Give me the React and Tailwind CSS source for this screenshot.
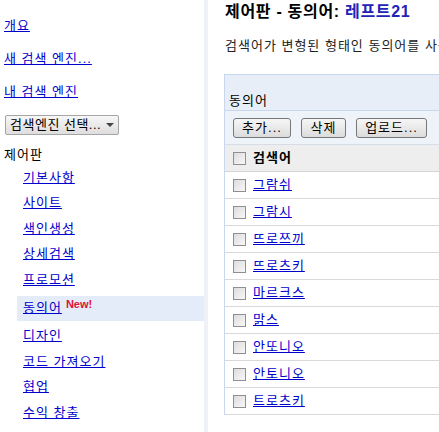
import React from "react";

const FONT = { fontFamily: '"Liberation Sans", "Noto Sans CJK KR", sans-serif' };

function Checkbox() {
  return (
    <span className="inline-block w-[13px] h-[13px] border border-[#8f8f8f] bg-gradient-to-br from-[#dcdcdc] to-[#f8f8f8] shrink-0" />
  );
}

function Btn({ children, w }) {
  return (
    <button
      className={`h-[20px] ${w} border border-[#777] rounded-[3px] bg-gradient-to-b from-[#f6f6f6] to-[#dcdcdc] text-[13px] leading-[18px] tracking-[1px] text-black flex items-center justify-center`}
      style={FONT}
    >
      {children}
    </button>
  );
}

const subItems1 = ["기본사항", "사이트", "색인생성", "상세검색", "프로모션"];
const subItems2 = ["디자인", "코드 가져오기", "협업", "수익 창출"];
const rows = ["그람쉬", "그람시", "뜨로쯔끼", "뜨로츠키", "마르크스", "맑스", "안또니오", "안토니오", "트로츠키"];

export default function App() {
  return (
    <div className="w-[439px] h-[432px] overflow-hidden bg-white flex text-[13px] tracking-[1px]" style={FONT}>
      {/* Sidebar */}
      <div className="w-[204px] shrink-0 pt-[10px]">
        <div className="h-[32px] flex items-center pl-[4px]">
          <a className="text-[#0000cc] underline leading-[16px]">개요</a>
        </div>
        <div className="h-[34px] flex items-center pl-[4px]">
          <a className="text-[#0000cc] underline leading-[16px]">새 검색 엔진...</a>
        </div>
        <div className="h-[32px] flex items-center pl-[4px]">
          <a className="text-[#0000cc] underline leading-[16px]">내 검색 엔진</a>
        </div>
        <div className="mt-[7px] ml-[5px] w-[114px] h-[20px] border border-[#a5a5a5] rounded-[2px] bg-gradient-to-b from-[#f7f7f7] to-[#dedede] flex items-center pl-[4px] pr-[4px] justify-between">
          <span className="text-[13px] leading-[16px] tracking-[0.5px] text-black whitespace-nowrap">검색엔진 선택...</span>
          <span className="w-0 h-0 border-l-[4px] border-r-[4px] border-t-[4px] border-l-transparent border-r-transparent border-t-[#444] shrink-0" />
        </div>
        <div className="mt-[10px] h-[20px] flex items-center pl-[4px] text-black leading-[16px]">제어판</div>
        {subItems1.map((t) => (
          <div key={t} className="h-[25.5px] flex items-center pl-[23px]">
            <a className="text-[#0000cc] underline leading-[16px]">{t}</a>
          </div>
        ))}
        <div className="my-[3px] ml-[17px] h-[25px] bg-[#e5ecf9] flex items-center pl-[6px]">
          <a className="text-[#0000cc] underline leading-[16px]">동의어</a>
          <span className="ml-[4px] -mt-[9px] text-[11px] font-bold tracking-normal text-[#dd1133] leading-[12px]">New!</span>
        </div>
        {subItems2.map((t) => (
          <div key={t} className="h-[25.5px] flex items-center pl-[23px]">
            <a className="text-[#0000cc] underline leading-[16px]">{t}</a>
          </div>
        ))}
      </div>

      {/* Stripe */}
      <div className="w-[4px] shrink-0 bg-[#eef1f6]" />

      {/* Main */}
      <div className="flex-1 overflow-hidden pl-[16px]">
        <div className="h-[24px] flex items-center pl-[1px] text-[16px] font-bold tracking-[0.7px] text-black whitespace-nowrap leading-[20px]">
          제어판 - 동의어:&nbsp;<span className="text-[#2323b8]">레프트21</span>
        </div>
        <div className="mt-[10px] h-[24px] flex items-center pl-[1px] whitespace-nowrap text-[#222] leading-[16px]">
          검색어가 변형된 형태인 동의어를 사용하여 검색 결과를 개선합니다.
        </div>
        <div className="mt-[16px] w-[320px] border-l border-t border-[#c8d7ee]">
          <div className="h-[36px] bg-[#e8eef7] flex items-end pl-[4px] pb-[1px] border-b border-[#c9d8ee]">
            <span className="text-black leading-[16px]">동의어</span>
          </div>
          <div className="h-[34px] bg-[#eef3fa] flex items-center gap-[10px] pl-[8px] pt-[1px] border-b border-[#d6dde6]">
            <Btn w="w-[58px]">추가...</Btn>
            <Btn w="w-[45px]">삭제</Btn>
            <Btn w="w-[71px]">업로드...</Btn>
          </div>
          <div className="h-[27px] bg-[#eeeeee] flex items-center pl-[8px] gap-[7px] border-b border-[#d6d6d6]">
            <Checkbox />
            <span className="font-bold text-black leading-[16px]">검색어</span>
          </div>
          {rows.map((r) => (
            <div key={r} className="h-[27px] bg-white flex items-center pl-[8px] gap-[7px] border-b border-[#d9d9d9]">
              <Checkbox />
              <a className="text-[#0000cc] underline leading-[16px]">{r}</a>
            </div>
          ))}
        </div>
      </div>
    </div>
  );
}
